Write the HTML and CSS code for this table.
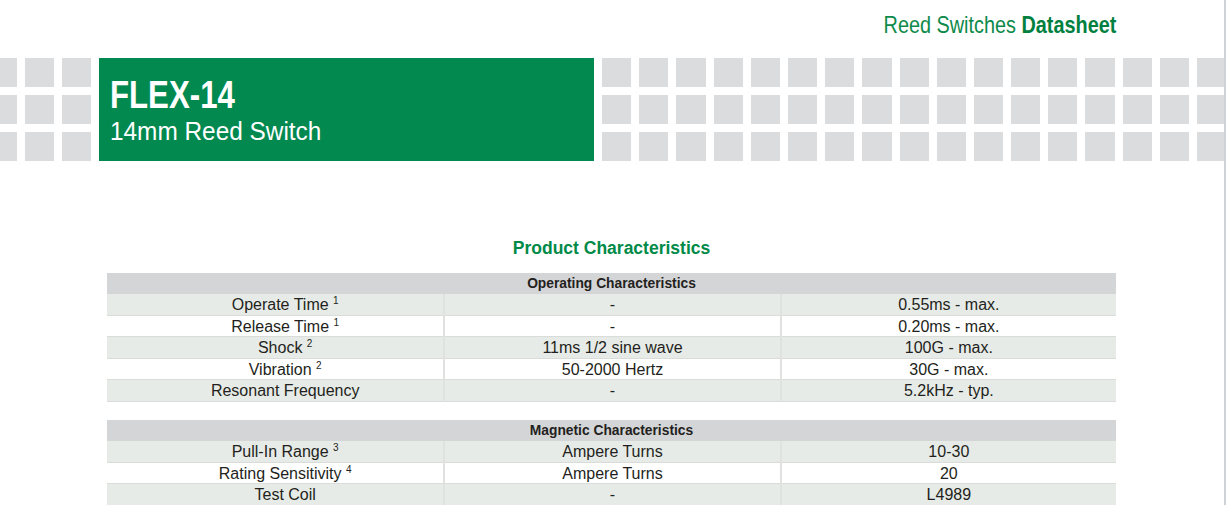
FILE: index.html
```html
<!DOCTYPE html>
<html lang="en">
<head>
<meta charset="utf-8">
<title>FLEX-14 Reed Switch Datasheet</title>
<link rel="stylesheet" href="styles.css">
</head>
<body>
<div class="page">
  <header class="top">
    <span class="top-text"><span class="top-light">Reed Switches</span> <span class="top-bold">Datasheet</span></span>
  </header>

  <section class="band">
    <div class="squares squares-left">
      <i></i><i></i><i></i><i></i><i></i><i></i><i></i><i></i><i></i>
    </div>
    <div class="hero">
      <h1 class="hero-title"><span>FLEX-14</span></h1>
      <p class="hero-sub"><span>14mm Reed Switch</span></p>
    </div>
    <div class="squares squares-right">
      <i></i><i></i><i></i><i></i><i></i><i></i><i></i><i></i><i></i>
      <i></i><i></i><i></i><i></i><i></i><i></i><i></i><i></i><i></i>
      <i></i><i></i><i></i><i></i><i></i><i></i><i></i><i></i><i></i>
      <i></i><i></i><i></i><i></i><i></i><i></i><i></i><i></i><i></i>
      <i></i><i></i><i></i><i></i><i></i><i></i><i></i><i></i><i></i>
      <i></i><i></i><i></i><i></i><i></i><i></i>
    </div>
  </section>

  <h2 class="section-title">Product Characteristics</h2>

  <div class="spec">
    <div class="spec-head">Operating Characteristics</div>
    <div class="spec-row alt"><span>Operate Time <sup>1</sup></span><span>-</span><span>0.55ms - max.</span></div>
    <div class="spec-row"><span>Release Time <sup>1</sup></span><span>-</span><span>0.20ms - max.</span></div>
    <div class="spec-row alt"><span>Shock <sup>2</sup></span><span>11ms 1/2 sine wave</span><span>100G - max.</span></div>
    <div class="spec-row"><span>Vibration <sup>2</sup></span><span>50-2000 Hertz</span><span>30G - max.</span></div>
    <div class="spec-row alt"><span>Resonant Frequency</span><span>-</span><span>5.2kHz - typ.</span></div>
  </div>

  <div class="spec spec-second">
    <div class="spec-head">Magnetic Characteristics</div>
    <div class="spec-row alt"><span>Pull-In Range <sup>3</sup></span><span>Ampere Turns</span><span>10-30</span></div>
    <div class="spec-row"><span>Rating Sensitivity <sup>4</sup></span><span>Ampere Turns</span><span>20</span></div>
    <div class="spec-row alt"><span>Test Coil</span><span>-</span><span>L4989</span></div>
  </div>
</div>
</body>
</html>
```

FILE: styles.css
```css
html, body {
  margin: 0;
  padding: 0;
  background: #ffffff;
}

body {
  font-family: "Liberation Sans", Arial, sans-serif;
  color: #231f20;
}

.page {
  width: 1224px;
  height: 505px;
  border-right: 2px solid #cfd2d6;
  overflow: hidden;
}

/* top header */
.top {
  height: 58px;
  box-sizing: border-box;
  padding: 13px 108px 0 0;
  text-align: right;
  font-size: 24.5px;
  line-height: 24px;
  color: #0d8a4a;
  white-space: nowrap;
}

.top-text {
  display: inline-block;
  transform: scaleX(0.81);
  transform-origin: right center;
}

.top-light {
  font-weight: 400;
}

.top-bold {
  font-weight: 700;
  color: #00803f;
}

/* green band with grey squares */
.band {
  display: flex;
  gap: 8px;
  height: 103px;
  overflow: hidden;
}

.squares {
  flex-shrink: 0;
  display: grid;
  grid-template-rows: repeat(3, 29px);
  grid-auto-flow: column;
  grid-auto-columns: 29.2px;
  gap: 8px;
}

.squares i {
  display: block;
  background: #dbdcde;
}

.squares-left {
  margin-left: -12px;
  grid-auto-columns: 29px;
}

.hero {
  flex-shrink: 0;
  width: 495px;
  box-sizing: border-box;
  padding: 17px 0 0 11px;
  background: #028950;
  color: #ffffff;
  white-space: nowrap;
}

.hero-title {
  margin: 0;
  font-size: 39px;
  line-height: 40px;
  font-weight: 700;
}

.hero-title span {
  display: inline-block;
  transform: scaleX(0.8);
  transform-origin: left center;
}

.hero-sub {
  margin: 1px 0 0;
  font-size: 26.5px;
  line-height: 30px;
  font-weight: 400;
}

.hero-sub span {
  display: inline-block;
  transform: scaleX(0.92);
  transform-origin: left center;
}

/* section title */
.section-title {
  margin: 77px 0 15px;
  padding-left: 107px;
  width: 1009px;
  text-align: center;
  font-size: 17.5px;
  line-height: 20px;
  font-weight: 700;
  color: #008a47;
  box-sizing: content-box;
}

/* spec tables */
.spec {
  margin-left: 107px;
  width: 1009px;
}

.spec-second {
  margin-top: 18px;
}

.spec-head {
  height: 21px;
  box-sizing: border-box;
  padding-top: 1px;
  background: #d4d5d7;
  text-align: center;
  font-size: 13.8px;
  line-height: 20px;
  font-weight: 700;
  color: #231f20;
}

.spec-row {
  display: grid;
  grid-template-columns: 1fr 1fr 1fr;
  height: 21.6px;
  box-sizing: border-box;
  border-bottom: 1px solid #d9dcd9;
  background: #ffffff;
  font-size: 16px;
  line-height: 21.6px;
}

.spec-row.alt {
  background: #e7ebe7;
}

.spec-row span {
  text-align: center;
  white-space: nowrap;
}

.spec-row span:first-child {
  padding-left: 20px;
}

.spec-row span + span {
  border-left: 2px solid #dfe2df;
}

.spec-row sup {
  font-size: 10px;
  line-height: 0;
  vertical-align: 6px;
}
```
